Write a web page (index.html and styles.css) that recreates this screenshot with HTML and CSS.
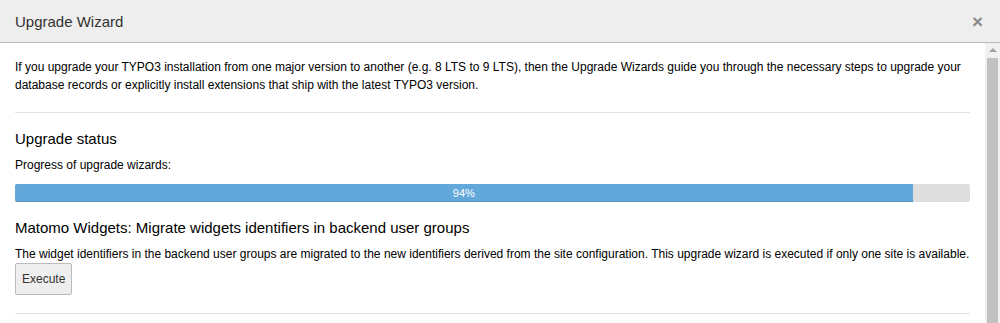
FILE: index.html
```html
<!DOCTYPE html>
<html>
<head>
<meta charset="utf-8">
<link rel="stylesheet" href="styles.css">
</head>
<body>
<div class="modal">
  <div class="modal-header">
    <h4 class="modal-title">Upgrade Wizard</h4>
    <span class="close">&times;</span>
  </div>
  <div class="modal-main">
    <div class="modal-body">
      <p class="intro">If you upgrade your TYPO3 installation from one major version to another (e.g. 8 LTS to 9 LTS), then the Upgrade Wizards guide you through the necessary steps to upgrade your database records or explicitly install extensions that ship with the latest TYPO3 version.</p>
      <hr class="sep sep-top">
      <h4 class="section-title">Upgrade status</h4>
      <p class="label">Progress of upgrade wizards:</p>
      <div class="progress"><div class="progress-bar" style="width:94%">94%</div></div>
      <h4 class="wizard-title">Matomo Widgets: Migrate widgets identifiers in backend user groups</h4>
      <p class="wizard-text">The widget identifiers in the backend user groups are migrated to the new identifiers derived from the site configuration. This upgrade wizard is executed if only one site is available.</p>
      <button class="btn">Execute</button>
      <hr class="sep sep-bottom">
    </div>
    <div class="scrollbar">
      <div class="arrow"></div>
      <div class="thumb"></div>
    </div>
  </div>
</div>
</body>
</html>
```

FILE: styles.css
```css
html, body {
  margin: 0;
  padding: 0;
  height: 323px;
  overflow: hidden;
  background: #fff;
}
body {
  font-family: "Liberation Sans", Arial, sans-serif;
  font-size: 12px;
  color: #000;
}
.modal {
  display: flex;
  flex-direction: column;
  height: 323px;
}
.modal-header {
  height: 42px;
  background: #eeeeee;
  border-bottom: 1px solid #bbbbbb;
  display: flex;
  align-items: center;
  justify-content: space-between;
  padding: 0 17px 0 15px;
  flex: none;
}
.modal-title {
  margin: 0;
  font-size: 15px;
  font-weight: normal;
  color: #333;
  line-height: 17px;
}
.close {
  font-size: 19px;
  font-weight: bold;
  color: #8a8a8a;
  line-height: 19px;
  margin-top: 1px;
}
.modal-main {
  flex: 1;
  display: flex;
  min-height: 0;
}
.modal-body {
  flex: 1;
  padding: 15px 15px 0 15px;
  overflow: hidden;
}
p {
  margin: 0;
  line-height: 18px;
}
.sep {
  border: 0;
  border-top: 1px solid #e3e3e3;
  margin: 18px 0 18px 0;
  height: 0;
}
.sep-top {
  margin-bottom: 17px;
}
.section-title, .wizard-title {
  margin: 0;
  font-size: 15px;
  font-weight: normal;
  line-height: 17px;
  color: #000;
}
.section-title {
  margin-bottom: 9px;
}
.label {
  margin-bottom: 10px;
}
.progress {
  height: 18px;
  background: #dedede;
  border-radius: 2px;
  overflow: hidden;
  margin-bottom: 17px;
}
.progress-bar {
  height: 18px;
  background: #62a8db;
  box-shadow: inset 0 -1px 0 rgba(0,0,0,0.15);
  color: #fff;
  font-size: 11px;
  line-height: 18px;
  text-align: center;
}
.wizard-title {
  margin-bottom: 9px;
}
.btn {
  display: block;
  margin: 0;
  height: 32px;
  padding: 0 6px;
  font-family: "Liberation Sans", Arial, sans-serif;
  font-size: 12px;
  color: #333;
  background: #eeeeee;
  border: 1px solid #bbbbbb;
  border-radius: 2px;
}
.sep-bottom {
  margin-top: 18px;
}
.scrollbar {
  width: 15px;
  flex: none;
  background: #f1f1f1;
  display: flex;
  flex-direction: column;
  align-items: center;
}
.arrow {
  width: 0;
  height: 0;
  border-left: 4px solid transparent;
  border-right: 4px solid transparent;
  border-bottom: 4px solid #a3a3a3;
  margin-top: 5px;
  margin-bottom: 6px;
}
.thumb {
  width: 11px;
  flex: 1;
  background: #c1c1c1;
}
```
